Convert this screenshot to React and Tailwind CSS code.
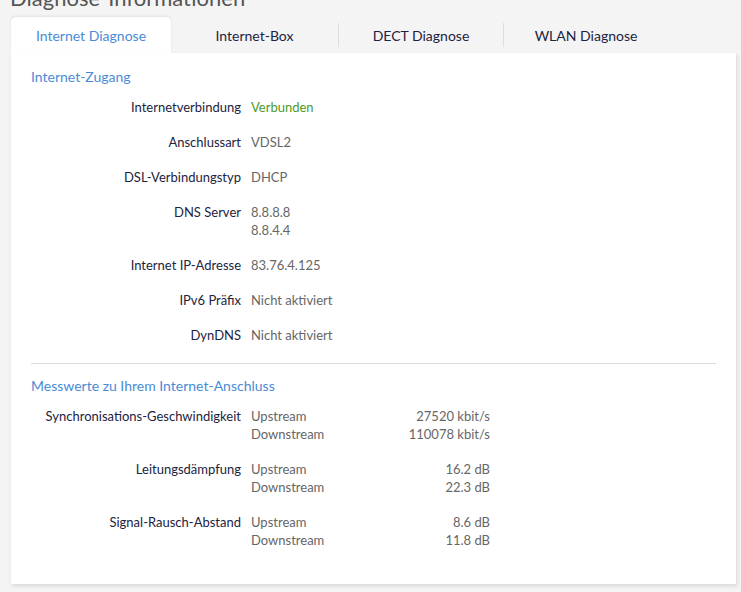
import React from "react";

const font = { fontFamily: "Lato, 'Open Sans', sans-serif" };

function Row({ label, children }) {
  return (
    <div className="flex leading-[18px]">
      <div className="w-[220px] text-right text-[#1c2340] pr-[10px]">{label}</div>
      <div className="text-[#666]">{children}</div>
    </div>
  );
}

function MRow({ label, up, down }) {
  return (
    <div className="flex leading-[18px]">
      <div className="w-[220px] text-right text-[#1c2340] pr-[10px]">{label}</div>
      <div className="w-[239px] text-[#666]">
        <div className="flex justify-between"><span>Upstream</span><span>{up}</span></div>
        <div className="flex justify-between"><span>Downstream</span><span>{down}</span></div>
      </div>
    </div>
  );
}

export default function App() {
  return (
    <div className="w-[741px] h-[592px] overflow-hidden bg-[#f4f4f4] text-[13px]" style={font}>
      <div className="pl-[10px] mt-[-18px] h-[35px] text-[22px] leading-[32px] text-[#555]">Diagnose-Informationen</div>
      <div className="flex ml-[11px] h-[36px] text-[14px] text-[#1c2340]">
        <div className="w-[160px] bg-white rounded-t-[5px] flex items-center justify-center text-[#4a8bd6] shadow-[0_-1px_3px_rgba(0,0,0,0.08)]">Internet Diagnose</div>
        <div className="w-[167px] flex items-center justify-center">Internet-Box</div>
        <div className="w-px h-[24px] self-center bg-[#ddd]"></div>
        <div className="w-[164px] flex items-center justify-center">DECT Diagnose</div>
        <div className="w-px h-[24px] self-center bg-[#ddd]"></div>
        <div className="w-[164px] flex items-center justify-center">WLAN Diagnose</div>
      </div>
      <div className="ml-[11px] w-[725px] bg-white shadow-[1px_2px_4px_rgba(0,0,0,0.12)] px-[20px] pt-[15px] pb-[35px]">
        <div className="text-[14px] leading-[18px] text-[#4a8bd6]">Internet-Zugang</div>
        <div className="flex flex-col gap-[17px] mt-[12px]">
          <Row label="Internetverbindung"><span className="text-[#4e9a1f]">Verbunden</span></Row>
          <Row label="Anschlussart">VDSL2</Row>
          <Row label="DSL-Verbindungstyp">DHCP</Row>
          <Row label="DNS Server"><div>8.8.8.8</div><div>8.8.4.4</div></Row>
          <Row label="Internet IP-Adresse">83.76.4.125</Row>
          <Row label="IPv6 Präfix">Nicht aktiviert</Row>
          <Row label="DynDNS">Nicht aktiviert</Row>
        </div>
        <div className="h-px bg-[#ddd] mt-[19px]"></div>
        <div className="text-[14px] leading-[18px] text-[#4a8bd6] mt-[13px]">Messwerte zu Ihrem Internet-Anschluss</div>
        <div className="flex flex-col gap-[17px] mt-[12px]">
          <MRow label="Synchronisations-Geschwindigkeit" up="27520 kbit/s" down="110078 kbit/s" />
          <MRow label="Leitungsdämpfung" up="16.2 dB" down="22.3 dB" />
          <MRow label="Signal-Rausch-Abstand" up="8.6 dB" down="11.8 dB" />
        </div>
      </div>
    </div>
  );
}
